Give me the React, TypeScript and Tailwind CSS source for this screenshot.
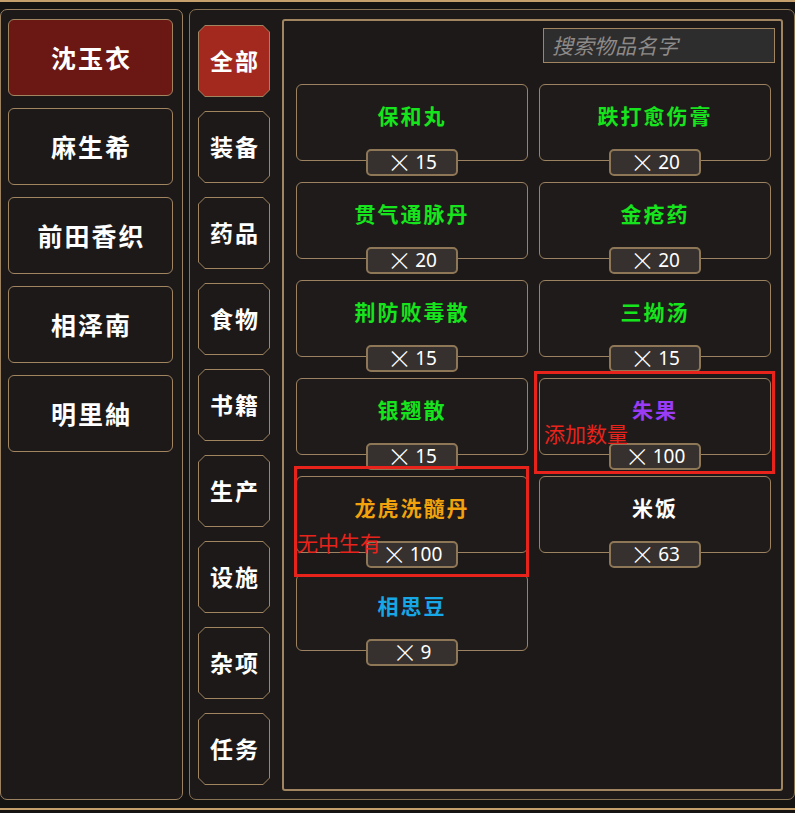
import React from "react";

const FONT = { fontFamily: '"Noto Sans CJK SC", "Noto Sans", sans-serif' };

const chars = ["沈玉衣", "麻生希", "前田香织", "相泽南", "明里紬"];
const tabs = ["全部", "装备", "药品", "食物", "书籍", "生产", "设施", "杂项", "任务"];

type Item = { name: string; color: string; count: number };
const items: Item[] = [
  { name: "保和丸", color: "text-[#16e41c]", count: 15 },
  { name: "跌打愈伤膏", color: "text-[#16e41c]", count: 20 },
  { name: "贯气通脉丹", color: "text-[#16e41c]", count: 20 },
  { name: "金疮药", color: "text-[#16e41c]", count: 20 },
  { name: "荆防败毒散", color: "text-[#16e41c]", count: 15 },
  { name: "三拗汤", color: "text-[#16e41c]", count: 15 },
  { name: "银翘散", color: "text-[#16e41c]", count: 15 },
  { name: "朱果", color: "text-[#9a3cf5]", count: 100 },
  { name: "龙虎洗髓丹", color: "text-[#f2a20c]", count: 100 },
  { name: "米饭", color: "text-white", count: 63 },
  { name: "相思豆", color: "text-[#17a6e6]", count: 9 },
];

function Tab({ label, active }: { label: string; active: boolean }) {
  return (
    <div className="w-[72px] h-[72px] bg-[#a08560] [clip-path:polygon(7px_0,calc(100%_-_7px)_0,100%_7px,100%_calc(100%_-_7px),calc(100%_-_7px)_100%,7px_100%,0_calc(100%_-_7px),0_7px)] p-px">
      <div
        className={`w-full h-full flex items-center justify-center pb-[2px] [clip-path:polygon(6px_0,calc(100%_-_6px)_0,100%_6px,100%_calc(100%_-_6px),calc(100%_-_6px)_100%,6px_100%,0_calc(100%_-_6px),0_6px)] ${
          active ? "bg-[#a3291f]" : "bg-[#1c1918]"
        }`}
      >
        <span className="text-white text-[23px] font-bold tracking-[2px] pl-[2px]">{label}</span>
      </div>
    </div>
  );
}

function ItemCard({ item }: { item: Item }) {
  return (
    <div className="relative h-[92px]">
      <div className="h-[77px] border border-[#9c8260] rounded-[6px] bg-[#1e1b1a] flex justify-center pt-[16px]">
        <span className={`${item.color} text-[21px] leading-[28px] font-bold tracking-[2px]`}>{item.name}</span>
      </div>
      <div className="absolute bottom-0 left-1/2 -translate-x-1/2 w-[92px] h-[27px] rounded-[5px] border-2 border-[#8e7756] bg-[#36312f] flex items-center justify-center text-white">
        <span className="text-[25px] leading-none font-light mr-[3px] -mt-[2px]">×</span>
        <span className="text-[19px] leading-none" style={{ fontFamily: '"Noto Sans", sans-serif' }}>
          {item.count}
        </span>
      </div>
    </div>
  );
}

export default function App() {
  return (
    <div className="w-[795px] h-[813px] bg-[#161413] relative overflow-hidden" style={FONT}>
      <div className="h-[2px] bg-[#c6a06c]" />
      <div className="flex pt-[7px] h-[806px]">
        {/* Left character panel */}
        <div className="w-[183px] h-[791px] border border-[#9c8260] rounded-[7px] bg-[#1c1918] pl-[7px] pt-[9px] flex flex-col gap-[12px]">
          {chars.map((c, i) => (
            <div
              key={c}
              className={`w-[165px] h-[77px] rounded-[6px] border border-[#a08560] flex items-center justify-center ${
                i === 0 ? "bg-[#6b1714]" : "bg-[#1c1918]"
              }`}
            >
              <span className="text-white text-[25px] font-bold tracking-[2px] pl-[2px]">{c}</span>
            </div>
          ))}
        </div>

        {/* Middle panel */}
        <div className="ml-[6px] w-[606px] h-[791px] border border-[#8a7456] rounded-[7px] bg-[#1c1918] flex items-start">
          <div className="ml-[8px] mt-[15px] flex flex-col gap-[14px]">
            {tabs.map((t, i) => (
              <Tab key={t} label={t} active={i === 0} />
            ))}
          </div>

          {/* Content panel */}
          <div className="ml-[12px] mt-[9px] w-[501px] h-[772px] border-2 border-[#a08560] rounded-[3px] bg-[#1c1918] flex flex-col">
            <div className="flex justify-end pr-[6px] pt-[7px]">
              <div className="w-[232px] h-[35px] border border-[#a08560] bg-[#2e2d2e] flex items-center pl-[8px]">
                <span className="italic text-[#8d8a88] text-[21px] leading-none">搜索物品名字</span>
              </div>
            </div>
            <div className="mt-[21px] pl-[12px] grid grid-cols-[232px_232px] gap-x-[11px] gap-y-[6px]">
              {items.map((it) => (
                <ItemCard key={it.name} item={it} />
              ))}
            </div>
          </div>
        </div>
      </div>
      <div className="h-[2px] bg-[#c6a06c]" />

      {/* Annotations */}
      <div className="absolute left-[534px] top-[371px] w-[241px] h-[103px] border-[3px] border-[#e8231c]" />
      <div className="absolute left-[544px] top-[420px] text-[#e8231c] text-[21px] leading-[26px]">添加数量</div>
      <div className="absolute left-[294px] top-[466px] w-[235px] h-[111px] border-[3px] border-[#e8231c]" />
      <div className="absolute left-[297px] top-[529px] text-[#e8231c] text-[21px] leading-[26px]">无中生有</div>
    </div>
  );
}
